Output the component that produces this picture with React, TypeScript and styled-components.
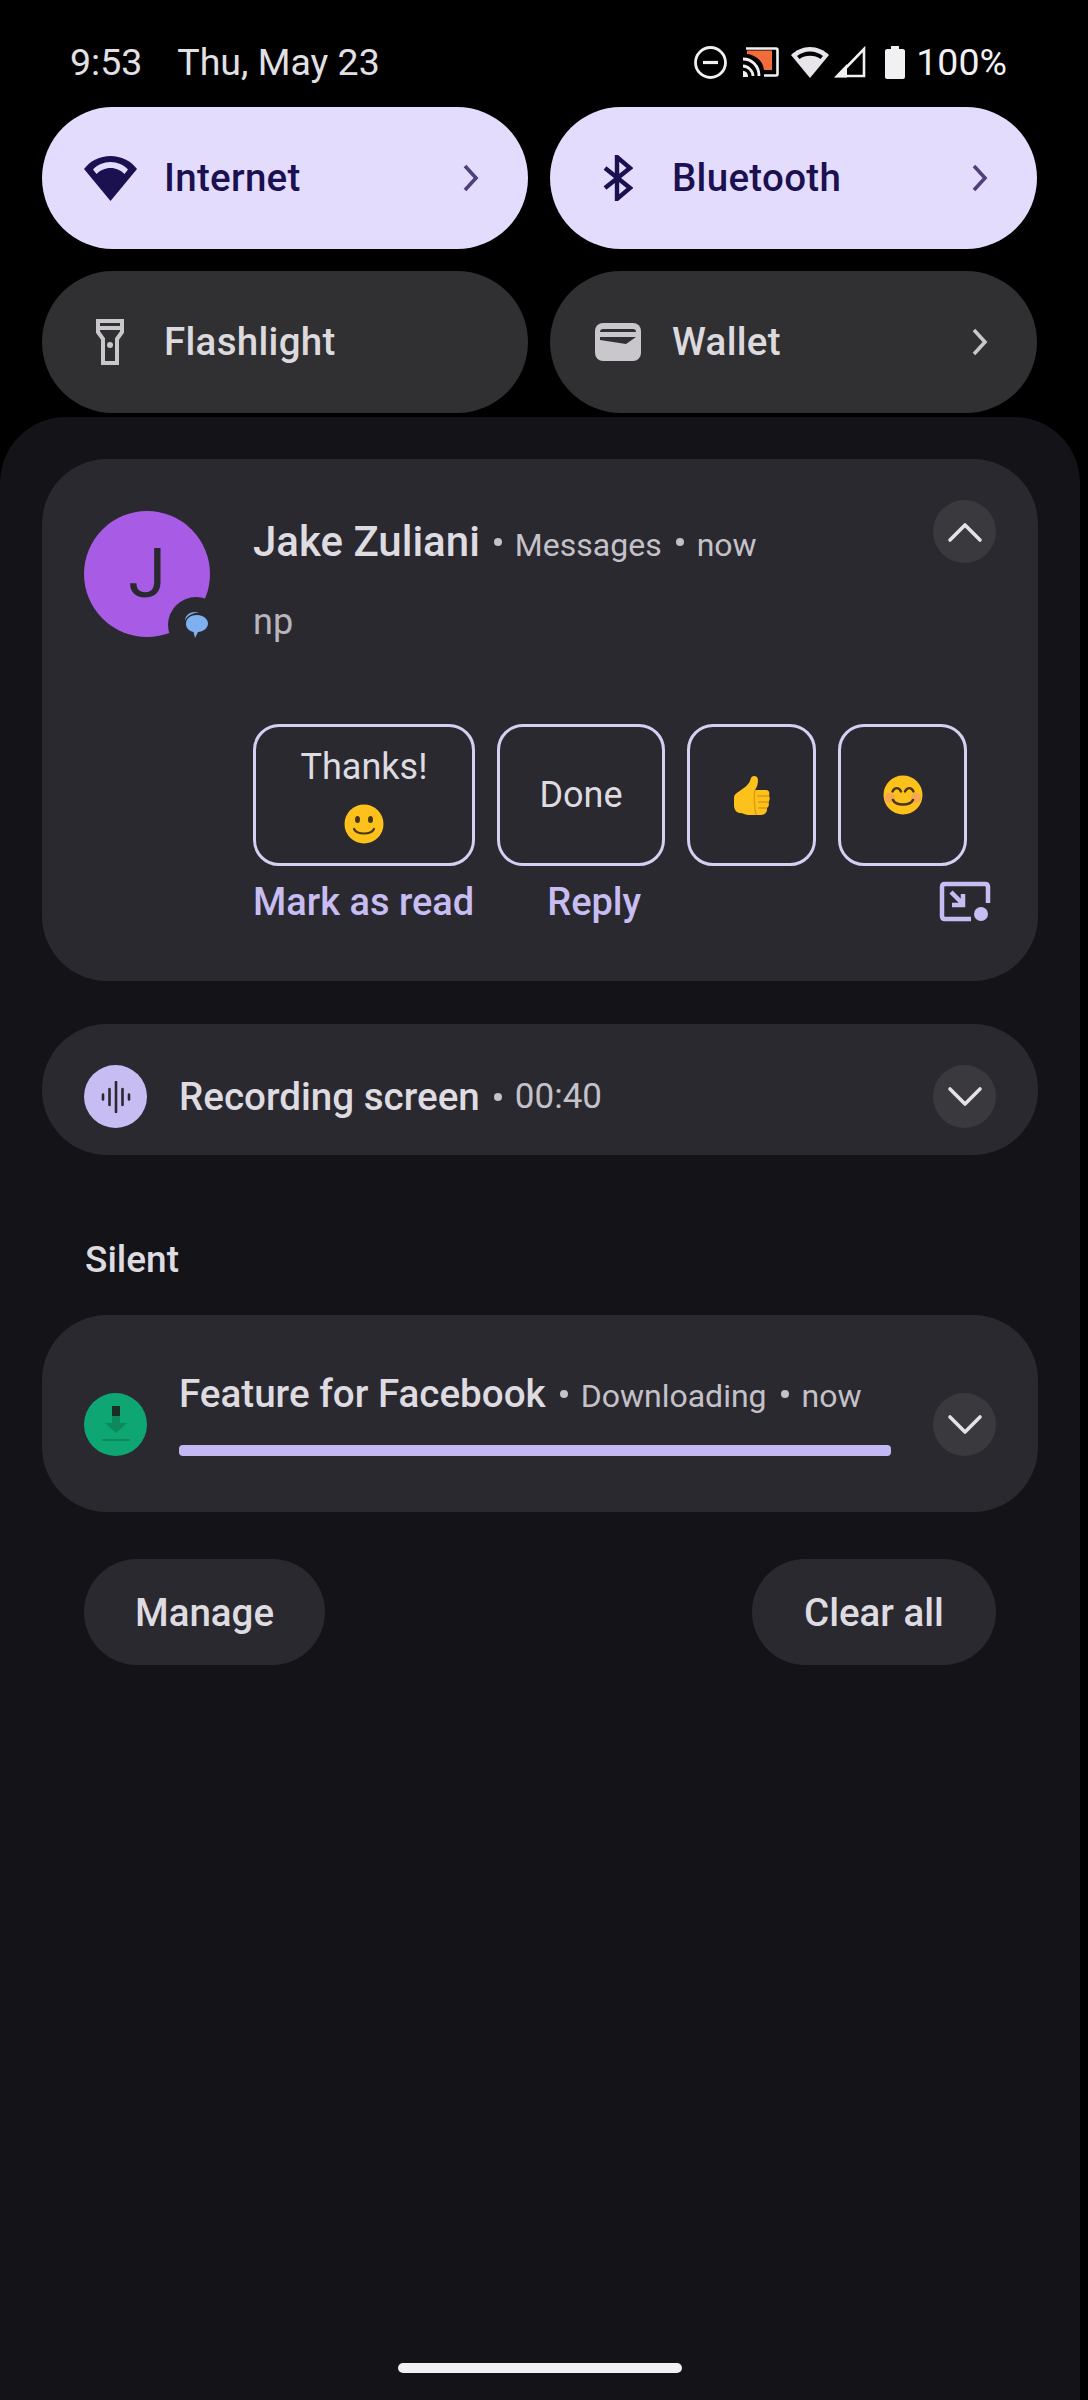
import React from 'react';
import styled, { createGlobalStyle } from 'styled-components';

const GlobalStyle = createGlobalStyle`
  html, body {
    margin: 0;
    padding: 0;
    background: #000;
  }
  * {
    box-sizing: border-box;
  }
`;

const Screen = styled.div`
  width: 1088px;
  height: 2400px;
  background: #000;
  font-family: Roboto, "Noto Sans", sans-serif;
  display: flex;
  flex-direction: column;
  overflow: hidden;
`;

const StatusBar = styled.div`
  height: 107px;
  padding: 40px 81px 0 70px;
  display: flex;
  align-items: flex-start;
  justify-content: space-between;
  color: #e2e0e4;
  font-size: 37.5px;
  line-height: 44px;
`;

const StatusLeft = styled.div`
  display: flex;
  gap: 35px;
`;

const StatusRight = styled.div`
  display: flex;
  align-items: center;
  height: 44px;
  color: #f1f0f3;
`;

const StatusSlot = styled.span<{ $left: number }>`
  display: flex;
  align-items: center;
  margin-left: ${(p) => p.$left}px;
`;

const TileGrid = styled.div`
  display: grid;
  grid-template-columns: 486px 487px;
  column-gap: 22px;
  row-gap: 22px;
  padding-left: 42px;
`;

const Tile = styled.div<{ $active?: boolean }>`
  height: 142px;
  border-radius: 71px;
  background: ${(p) => (p.$active ? '#e4dcfd' : '#303033')};
  color: ${(p) => (p.$active ? '#1b1150' : '#dcdade')};
  display: flex;
  align-items: center;
  padding: 0 48px 0 45px;
`;

const TileIcon = styled.div`
  width: 46px;
  height: 46px;
  flex: none;
  display: flex;
  align-items: center;
  justify-content: center;
  margin-right: 31px;
`;

const TileLabel = styled.div`
  flex: 1;
  font-size: 38.5px;
  font-weight: 500;
  letter-spacing: 0.3px;
  padding-bottom: 2px;
`;

const TileChevron = styled.svg<{ $active?: boolean }>`
  width: 18px;
  height: 28px;
  color: ${(p) => (p.$active ? '#4a4278' : '#c9c7cc')};
`;

const Panel = styled.div`
  margin-top: 4px;
  width: 1080px;
  flex: 1;
  background: #131318;
  border-radius: 66px 66px 0 0;
  padding: 42px 42px 0;
  display: flex;
  flex-direction: column;
`;

const Card = styled.div`
  width: 996px;
  background: #2b2930;
  border-radius: 65px;
  position: relative;
`;

const MessageCard = styled(Card)`
  height: 522px;
  padding: 52px 42px 0;
  display: flex;
  gap: 43px;
`;

const Avatar = styled.div`
  width: 126px;
  height: 126px;
  border-radius: 50%;
  background: #a85ce6;
  color: #2b2930;
  font-size: 68px;
  font-weight: 400;
  display: flex;
  align-items: center;
  justify-content: center;
  position: relative;
  flex: none;
`;

const AvatarBadge = styled.div`
  position: absolute;
  right: -14px;
  bottom: -16px;
  width: 56px;
  height: 56px;
  border-radius: 50%;
  background: #2b2930;
  display: flex;
  align-items: center;
  justify-content: center;
`;

const MessageBody = styled.div`
  flex: 1;
  display: flex;
  flex-direction: column;
  padding-top: 6px;
`;

const TitleRow = styled.div`
  display: flex;
  align-items: baseline;
  color: #c9c7cc;
  white-space: nowrap;
`;

const Title = styled.span<{ $size?: number }>`
  font-size: ${(p) => p.$size ?? 42}px;
  font-weight: 500;
  color: #dedbe1;
`;

const Meta = styled.span<{ $size?: number }>`
  font-size: ${(p) => p.$size ?? 32}px;
  color: #c4c1c9;
`;

const Dot = styled.span`
  width: 8px;
  height: 8px;
  margin: 0 13px 0 14px;
  border-radius: 50%;
  background: #c4c1c9;
  align-self: center;
`;

const MessageText = styled.div`
  margin-top: 34px;
  font-size: 36px;
  line-height: 44px;
  color: #b8b5bd;
`;

const Replies = styled.div`
  margin-top: 80px;
  display: flex;
  gap: 22px;
`;

const ReplyChip = styled.div<{ $w: number }>`
  width: ${(p) => p.$w}px;
  height: 142px;
  border: 3px solid #d6cff2;
  border-radius: 26px;
  color: #dedbe1;
  font-size: 36px;
  display: flex;
  flex-direction: column;
  align-items: center;
  justify-content: center;
  gap: 16px;
`;

const Actions = styled.div`
  margin-top: 13px;
  display: flex;
  align-items: center;
  width: 738px;
`;

const ActionLink = styled.div<{ $left?: number }>`
  font-size: 38px;
  font-weight: 500;
  line-height: 46px;
  color: #c7bdf2;
  margin-left: ${(p) => p.$left ?? 0}px;
`;

const PipIcon = styled.svg`
  width: 52px;
  height: 44px;
  margin-left: auto;
  margin-top: 2px;
`;

const ExpandButton = styled.div`
  width: 63px;
  height: 63px;
  border-radius: 50%;
  background: #3a393e;
  display: flex;
  align-items: center;
  justify-content: center;
  flex: none;
`;

const TopExpand = styled(ExpandButton)`
  position: absolute;
  top: 41px;
  right: 42px;
`;

const RowCard = styled(Card)<{ $h: number }>`
  height: ${(p) => p.$h}px;
  padding: 0 42px;
  display: flex;
  align-items: flex-start;
`;

const RoundIcon = styled.div<{ $bg: string }>`
  width: 63px;
  height: 63px;
  border-radius: 50%;
  background: ${(p) => p.$bg};
  display: flex;
  align-items: center;
  justify-content: center;
  flex: none;
`;

const RecordingCard = styled(RowCard)`
  margin-top: 43px;
  padding-top: 41px;
`;

const RecordingText = styled(TitleRow)`
  flex: 1;
  margin-left: 32px;
  height: 63px;
  align-items: center;
`;

const SectionLabel = styled.div`
  margin: 83px 0 0 43px;
  height: 77px;
  font-size: 37px;
  font-weight: 500;
  line-height: 44px;
  color: #dedbe1;
`;

const DownloadCard = styled(RowCard)`
  padding-top: 78px;
`;

const DownloadBody = styled.div`
  width: 712px;
  margin: -22px 42px 0 32px;
`;

const Progress = styled.div`
  margin-top: 29px;
  height: 11px;
  border-radius: 4px;
  background: #c3b8f3;
`;

const Footer = styled.div`
  margin-top: 47px;
  padding: 0 42px;
  display: flex;
  justify-content: space-between;
`;

const FooterButton = styled.div<{ $w: number }>`
  width: ${(p) => p.$w}px;
  height: 106px;
  border-radius: 53px;
  background: #2b2930;
  color: #dedbe1;
  font-size: 38.5px;
  font-weight: 500;
  display: flex;
  align-items: center;
  justify-content: center;
`;

const HomeBar = styled.div`
  margin: auto auto 27px;
  width: 284px;
  height: 10px;
  border-radius: 5px;
  background: #f1f0f3;
`;

const Chevron: React.FC<{ up?: boolean }> = ({ up }) => (
  <svg width="36" height="22" viewBox="0 0 36 22" fill="none">
    <path
      d={up ? 'M3 19L18 4L33 19' : 'M3 3L18 18L33 3'}
      stroke="#e6e1e9"
      strokeWidth="3.6"
      strokeLinecap="round"
      strokeLinejoin="round"
    />
  </svg>
);

const TileArrow: React.FC<{ active?: boolean }> = ({ active }) => (
  <TileChevron $active={active} viewBox="0 0 18 28" fill="none">
    <path d="M3 2L14 14L3 26" stroke="currentColor" strokeWidth="3.6" />
  </TileChevron>
);

const WifiIcon = () => (
  <svg width="53" height="46" viewBox="0 0 53 46" fill="#1b1150" style={{ flex: 'none' }}>
    <path d="M26.500 46L0 14C6 6 16 1 26.500 1S47 6 53 14Z" />
    <path d="M9 14.500C13.500 9.800 19.500 7 26.500 7S39.500 9.800 44 14.500L40.500 19C37 15.500 32 13 26.500 13S16 15.500 12.500 19Z" fill="#e4dcfd" />
  </svg>
);

const BluetoothIcon = () => (
  <svg width="30" height="46" viewBox="0 0 30 46" fill="none">
    <path d="M2 33L27 13L14 2V44L27 33L2 13" stroke="#1b1150" strokeWidth="4.400" />
  </svg>
);

const FlashlightIcon = () => (
  <svg width="28" height="46" viewBox="0 0 28 46" fill="none" stroke="#c9c7cc" strokeWidth="4">
    <path d="M2 2H26V13L21 20V44H7V20L2 13Z" />
    <path d="M3 9H25" />
    <circle cx="14" cy="26" r="3" fill="#c9c7cc" stroke="none" />
  </svg>
);

const WalletIcon = () => (
  <svg width="46" height="38" viewBox="0 0 46 38" style={{ flex: 'none' }}>
    <rect width="46" height="38" rx="8" fill="#c9c7cc" />
    <path d="M5 9C5 7 6 6 8 6H38C40 6 41 7 41 9Z" fill="#303033" />
    <path d="M5 14H41L31 21L5 17Z" fill="#303033" />
  </svg>
);

const DndIcon = () => (
  <svg width="33" height="33" viewBox="0 0 33 33" fill="none" stroke="#f1f0f3" strokeWidth="2.800">
    <circle cx="16.500" cy="16.500" r="15" />
    <path d="M9 16.500H24" strokeWidth="3.200" />
  </svg>
);

const CastIcon = () => (
  <svg width="36" height="30" viewBox="0 0 36 30">
    <path d="M3 1.500H33C34 1.500 34.500 2 34.500 3V27C34.500 28 34 28.500 33 28.500H21" fill="none" stroke="#f1f0f3" strokeWidth="2.600" />
    <path d="M4 3.500H29V23H21C20 14 13 8 4 7Z" fill="#f26b3a" />
    <path d="M0 12C9 12 16 19 16 29M0 19C5 19 10 24 10 29" fill="none" stroke="#f1f0f3" strokeWidth="2.800" />
    <path d="M0 24C3 24 5 26 5 30H0Z" fill="#f1f0f3" />
  </svg>
);

const StatusWifi = () => (
  <svg width="38" height="32" viewBox="0 0 38 32" fill="#e8e6ea">
    <path d="M19 32L0 9C5 4 12 1 19 1S33 4 38 9Z" />
    <path d="M6 10C10 7 14 5.500 19 5.500S28 7 32 10L29.500 13C26.500 11 23 9.800 19 9.800S11.500 11 8.500 13Z" fill="#000" />
  </svg>
);

const SignalIcon = () => (
  <svg width="33" height="32" viewBox="0 0 33 32" fill="none">
    <path d="M31 3V30H5Z" stroke="#f1f0f3" strokeWidth="2.600" />
    <path d="M1 31.500L14 18V31.500Z" fill="#f1f0f3" />
  </svg>
);

const BatteryIcon = () => (
  <svg width="20" height="33" viewBox="0 0 20 33" fill="#f1f0f3">
    <path d="M6 0H14V3H18C19 3 20 4 20 5V31C20 32 19 33 18 33H2C1 33 0 32 0 31V5C0 4 1 3 2 3H6Z" />
  </svg>
);

const MessageBubble = () => (
  <svg width="26" height="28" viewBox="0 0 26 28">
    <path d="M2 10C2 5 6 1 12 1H18C14 1 4 3 2 10Z" fill="#7fb0ef" />
    <path d="M3 13C3 7 8 4 14 4S25 8 25 12.500 20 21 15 21L12 27L10.500 21C6 20 3 17 3 13Z" fill="#7fb0ef" />
  </svg>
);

const WaveIcon = () => (
  <svg width="30" height="32" viewBox="0 0 30 32" stroke="#2b2930" strokeWidth="2.600" strokeLinecap="round">
    <path d="M2 13.500V18.500M8.500 8V24M15 1V31M21.500 8V24M28 13.500V18.500" />
  </svg>
);

const DownloadIcon = () => (
  <svg width="30" height="38" viewBox="0 0 30 38">
    <path d="M11 0H19V10H11Z" fill="#1b2e25" />
    <path d="M11 10H19V17H26L15 27L4 17H11Z" fill="#0d8a5c" />
    <path d="M1 33H29V35H1Z" fill="#0d8a5c" />
  </svg>
);

const SmileEmoji = () => (
  <svg width="40" height="40" viewBox="0 0 40 40">
    <circle cx="20" cy="20" r="19.500" fill="#fcc21b" />
    <ellipse cx="13.500" cy="15.500" rx="2.500" ry="3.600" fill="#4a3418" />
    <ellipse cx="26.500" cy="15.500" rx="2.500" ry="3.600" fill="#4a3418" />
    <path d="M10 25C13 31 27 31 30 25" fill="none" stroke="#4a3418" strokeWidth="2.200" strokeLinecap="round" />
  </svg>
);

const BlushEmoji = () => (
  <svg width="40" height="40" viewBox="0 0 40 40">
    <circle cx="20" cy="20" r="19.500" fill="#fcc21b" />
    <circle cx="7" cy="23" r="5" fill="#f59a6a" opacity="0.7" />
    <circle cx="33" cy="23" r="5" fill="#f59a6a" opacity="0.7" />
    <path d="M9.500 16.500C11.500 12 16 12 18 16.500M22 16.500C24 12 28.500 12 30.500 16.500" fill="none" stroke="#4a3418" strokeWidth="2.400" strokeLinecap="round" />
    <path d="M10 25C13 31 27 31 30 25" fill="none" stroke="#4a3418" strokeWidth="2.600" strokeLinecap="round" />
  </svg>
);

const ThumbEmoji = () => (
  <svg width="37" height="41" viewBox="0 0 37 41">
    <path d="M1 23C1 19 4 18 8 15C13 12 17 8 18 3C19 0 25 0 25 5C25 9 24 12 22 15H33C36 15 37 18 36 20C37 23 37 25 35.500 27C36.500 30 35.500 32 34 33C34.500 37 32 40 28 40H16C12 40 10 38 7 38C3 38 1 34 1 30Z" fill="#fcc21b" />
    <path d="M24 21H36M25 27H35.500M25 33H34M22 15C21 19 21 30 23 40" stroke="#e09a10" strokeWidth="1.400" fill="none" />
  </svg>
);

const App: React.FC = () => {
  return (
    <Screen>
      <GlobalStyle />
      <StatusBar>
        <StatusLeft>
          <span>9:53</span>
          <span>Thu, May 23</span>
        </StatusLeft>
        <StatusRight>
          <DndIcon />
          <StatusSlot $left={16}><CastIcon /></StatusSlot>
          <StatusSlot $left={12}><StatusWifi /></StatusSlot>
          <StatusSlot $left={4}><SignalIcon /></StatusSlot>
          <StatusSlot $left={19}><BatteryIcon /></StatusSlot>
          <StatusSlot $left={11}>100%</StatusSlot>
        </StatusRight>
      </StatusBar>

      <TileGrid>
        <Tile $active>
          <TileIcon><WifiIcon /></TileIcon>
          <TileLabel>Internet</TileLabel>
          <TileArrow active />
        </Tile>
        <Tile $active>
          <TileIcon><BluetoothIcon /></TileIcon>
          <TileLabel>Bluetooth</TileLabel>
          <TileArrow active />
        </Tile>
        <Tile>
          <TileIcon><FlashlightIcon /></TileIcon>
          <TileLabel>Flashlight</TileLabel>
        </Tile>
        <Tile>
          <TileIcon><WalletIcon /></TileIcon>
          <TileLabel>Wallet</TileLabel>
          <TileArrow />
        </Tile>
      </TileGrid>

      <Panel>
        <MessageCard>
          <Avatar>
            J
            <AvatarBadge><MessageBubble /></AvatarBadge>
          </Avatar>
          <MessageBody>
            <TitleRow>
              <Title>Jake Zuliani</Title>
              <Dot />
              <Meta>Messages</Meta>
              <Dot />
              <Meta>now</Meta>
            </TitleRow>
            <MessageText>np</MessageText>
            <Replies>
              <ReplyChip $w={222}>
                <span>Thanks!</span>
                <SmileEmoji />
              </ReplyChip>
              <ReplyChip $w={168}>Done</ReplyChip>
              <ReplyChip $w={129}><ThumbEmoji /></ReplyChip>
              <ReplyChip $w={129}><BlushEmoji /></ReplyChip>
            </Replies>
            <Actions>
              <ActionLink>Mark as read</ActionLink>
              <ActionLink $left={73}>Reply</ActionLink>
              <PipIcon viewBox="0 0 52 44" fill="none">
                <path d="M32 38H6C4 38 3 37 3 35V6C3 4 4 3 6 3H46C48 3 49 4 49 6V22" stroke="#c7bdf2" strokeWidth="4.500" />
                <path d="M12 11L24 23M24 13V24H13" stroke="#c7bdf2" strokeWidth="4.500" />
                <circle cx="42" cy="33" r="7" fill="#c7bdf2" />
              </PipIcon>
            </Actions>
          </MessageBody>
          <TopExpand><Chevron up /></TopExpand>
        </MessageCard>

        <RecordingCard $h={131}>
          <RoundIcon $bg="#c7bdf2"><WaveIcon /></RoundIcon>
          <RecordingText>
            <Title $size={38.6}>Recording screen</Title>
            <Dot />
            <Meta $size={35}>00:40</Meta>
          </RecordingText>
          <ExpandButton><Chevron /></ExpandButton>
        </RecordingCard>

        <SectionLabel>Silent</SectionLabel>

        <DownloadCard $h={197}>
          <RoundIcon $bg="#0ea673"><DownloadIcon /></RoundIcon>
          <DownloadBody>
            <TitleRow>
              <Title $size={38.6}>Feature for Facebook</Title>
              <Dot />
              <Meta>Downloading</Meta>
              <Dot />
              <Meta>now</Meta>
            </TitleRow>
            <Progress />
          </DownloadBody>
          <ExpandButton><Chevron /></ExpandButton>
        </DownloadCard>

        <Footer>
          <FooterButton $w={241}>Manage</FooterButton>
          <FooterButton $w={244}>Clear all</FooterButton>
        </Footer>

        <HomeBar />
      </Panel>
    </Screen>
  );
};

export default App;
